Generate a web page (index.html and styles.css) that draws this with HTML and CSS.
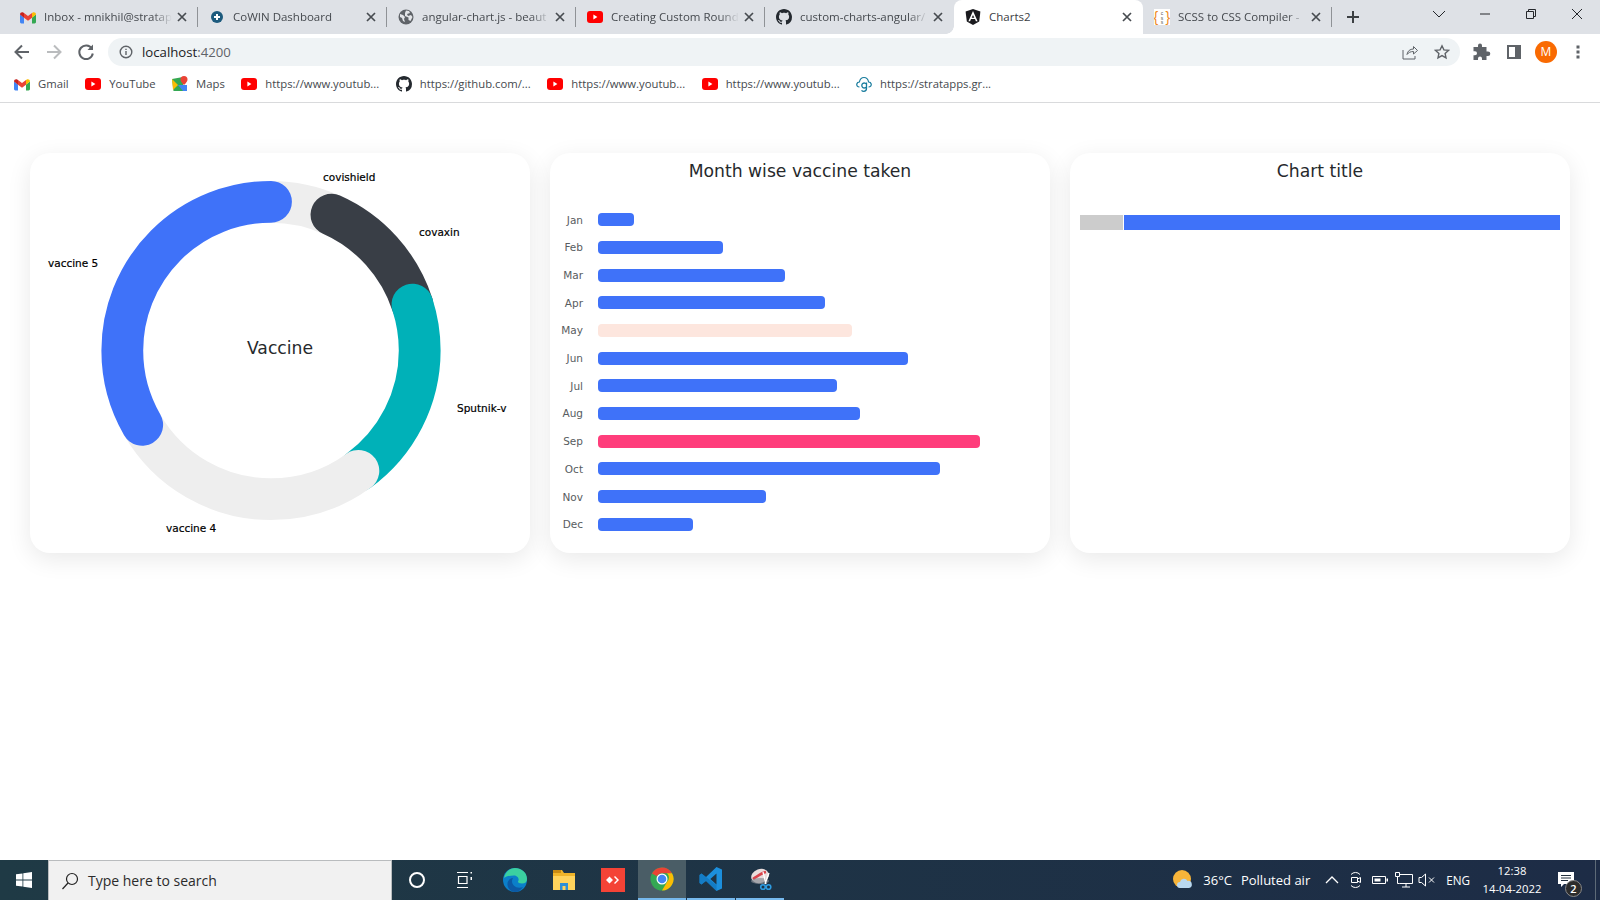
FILE: index.html
```html
<!DOCTYPE html>
<html lang="en">
<head>
    <meta charset="UTF-8">
    <title>Charts2</title>
    <link rel="stylesheet" href="styles.css">
</head>
<body>
<svg class="icon-defs" width="0" height="0">
    <symbol id="gmail" viewBox="0 0 16 13">
        <path fill="#4285f4" d="M0 4v7.6C0 12.4.6 13 1.4 13H4V7z"/>
        <path fill="#34a853" d="M12 7v6h2.6c.8 0 1.4-.6 1.4-1.4V4z"/>
        <path fill="#ea4335" d="M4 7.2V2.6l4 3 4-3v4.6l-4 3z"/>
        <path fill="#c5221f" d="M0 4c0-2 2-2.8 3.2-1.9L4 2.6v4.6z"/>
        <path fill="#fbbc04" d="M12 2.6l.8-.5C14 1.2 16 2 16 4l-4 3.2z"/>
    </symbol>
    <symbol id="youtube" viewBox="0 0 16 12">
        <rect width="16" height="12" rx="3" fill="#f00"/>
        <path fill="#fff" d="M6.4 3.6v4.800L10.4 6z"/>
    </symbol>
    <symbol id="github" viewBox="0 0 16 16">
        <path fill="#24292f" d="M8 0C3.58 0 0 3.58 0 8c0 3.54 2.29 6.53 5.47 7.59.4.07.55-.17.55-.38 0-.19-.01-.82-.01-1.49-2.01.37-2.53-.49-2.69-.94-.09-.23-.48-.94-.82-1.13-.28-.15-.68-.52-.01-.53.63-.01 1.08.58 1.23.82.72 1.21 1.87.87 2.33.66.07-.52.28-.87.51-1.07-1.78-.2-3.64-.89-3.64-3.95 0-.87.31-1.59.82-2.15-.08-.2-.36-1.02.08-2.12 0 0 .67-.21 2.2.82.64-.18 1.32-.27 2-.27.68 0 1.36.09 2 .27 1.53-1.04 2.2-.82 2.2-.82.44 1.1.16 1.92.08 2.12.51.56.82 1.27.82 2.15 0 3.07-1.87 3.75-3.65 3.95.29.25.54.73.54 1.48 0 1.07-.01 1.93-.01 2.2 0 .21.15.46.55.38A8.013 8.013 0 0016 8c0-4.42-3.58-8-8-8z"/>
    </symbol>
    <symbol id="close" viewBox="0 0 10 10">
        <path d="M1 1l8 8M9 1L1 9" stroke="#474b50" stroke-width="1.7" fill="none"/>
    </symbol>
</svg>

<header class="browser">
    <div class="tabstrip">
        <div class="tab">
            <svg class="favicon"><use href="#gmail"/></svg>
            <span class="tab-title">Inbox - mnikhil@stratap</span>
            <svg class="tab-close"><use href="#close"/></svg>
        </div>
        <div class="tab">
            <svg class="favicon" viewBox="0 0 16 16">
                <circle cx="8" cy="8" r="6" fill="#1c5a7d"/>
                <path d="M8 5v6M5 8h6" stroke="#fff" stroke-width="2"/>
            </svg>
            <span class="tab-title">CoWIN Dashboard</span>
            <svg class="tab-close"><use href="#close"/></svg>
        </div>
        <div class="tab">
            <svg class="favicon" viewBox="0 0 16 16">
                <circle cx="8" cy="8" r="7.5" fill="#5f6368"/>
                <path d="M2 5l3 1 2 2-1 2 1 3-2-1-1-3-2-1zM8 1.5l3 .5 1 2-3 1 1 2 3-1 1.5 2-2 4-2-1V8.5L7 7V4z" fill="#e3e5e8"/>
            </svg>
            <span class="tab-title">angular-chart.js - beaut</span>
            <svg class="tab-close"><use href="#close"/></svg>
        </div>
        <div class="tab">
            <svg class="favicon"><use href="#youtube"/></svg>
            <span class="tab-title">Creating Custom Round</span>
            <svg class="tab-close"><use href="#close"/></svg>
        </div>
        <div class="tab tab-before-active">
            <svg class="favicon"><use href="#github"/></svg>
            <span class="tab-title">custom-charts-angular/</span>
            <svg class="tab-close"><use href="#close"/></svg>
        </div>
        <div class="tab tab-active">
            <svg class="favicon" viewBox="0 0 16 16">
                <path fill="#1a1a1e" d="M8 0L.6 2.6l1.2 9.800L8 16l6.200-3.600 1.200-9.800z"/>
                <path fill="#fff" d="M8 2L3.400 12.300h1.700l.9-2.300h4l.9 2.300h1.700zM8 5.900L9.300 8.700H6.700z"/>
            </svg>
            <span class="tab-title tab-title-full">Charts2</span>
            <svg class="tab-close"><use href="#close"/></svg>
        </div>
        <div class="tab">
            <svg class="favicon" viewBox="0 0 16 16">
                <rect width="16" height="16" fill="#fff"/>
                <text x="-0.5" y="12.5" class="scss-brace">{</text>
                <text x="11.5" y="12.5" class="scss-brace">}</text>
                <text x="8" y="6" class="scss-letter">c</text>
                <text x="8" y="10.5" class="scss-letter">s</text>
                <text x="8" y="15" class="scss-letter">s</text>
            </svg>
            <span class="tab-title">SCSS to CSS Compiler -</span>
            <svg class="tab-close"><use href="#close"/></svg>
        </div>
        <svg class="new-tab" viewBox="0 0 14 14">
            <path d="M7 1v12M1 7h12" stroke="#3c4043" stroke-width="2"/>
        </svg>
        <div class="window-controls">
            <svg viewBox="0 0 46 28"><path d="M17 11l6 6 6-6"/></svg>
            <svg viewBox="0 0 46 28"><path d="M18 14h10"/></svg>
            <svg viewBox="0 0 46 28"><path d="M18.5 11.500h7v7h-7zM20.500 11.500v-2h7v7h-2"/></svg>
            <svg viewBox="0 0 46 28"><path d="M18 9l10 10M28 9L18 19"/></svg>
        </div>
    </div>

    <div class="toolbar">
        <svg class="tool-btn" viewBox="0 0 32 32"><path d="M23 16H10M16 9.5L9.5 16l6.5 6.5" class="tool-stroke"/></svg>
        <svg class="tool-btn tool-disabled" viewBox="0 0 32 32"><path d="M9 16h13M16 9.5l6.5 6.5-6.5 6.5" class="tool-stroke"/></svg>
        <svg class="tool-btn" viewBox="0 0 32 32"><path d="M21.800 12.500a6.800 6.800 0 1 0 1 5" class="tool-stroke"/><path d="M23 8.5v5.500h-5.500z" fill="#5f6368"/></svg>
        <div class="omnibox">
            <svg class="omni-info" viewBox="0 0 14 14">
                <circle cx="7" cy="7" r="5.8" fill="none" stroke="#5f6368" stroke-width="1.4"/>
                <path d="M7 6v4M7 3.700v1.400" stroke="#5f6368" stroke-width="1.4"/>
            </svg>
            <span class="url">localhost<span class="url-port">:4200</span></span>
            <svg class="omni-share" viewBox="0 0 16 16">
                <path d="M1 6v9h12v-3M5 10.5c.5-3.5 3-5.500 6.500-5.500V2.500L15.500 6.500 11.500 10V7.500C8.500 7.500 6.500 8.500 5 10.500z" fill="none" stroke="#5f6368" stroke-width="1"/>
            </svg>
            <svg class="omni-star" viewBox="0 0 16 16">
                <path d="M8 1.800l1.900 4.100 4.500.5-3.300 3 .9 4.400L8 11.600l-4 2.200.9-4.400-3.300-3 4.500-.5z" fill="none" stroke="#5f6368" stroke-width="1.4"/>
            </svg>
        </div>
        <svg class="tool-btn" viewBox="2 0 32 32"><path fill="#5f6368" d="M14 9.5a2 2 0 0 1 4 0V11h4.500v4.500H24a2.300 2.300 0 0 1 0 4.600h-1.500V24H18v-1.500a2 2 0 0 0-4 0V24H9.500v-4.800H11a2 2 0 0 0 0-4H9.500V11H14z"/></svg>
        <svg class="tool-btn" viewBox="0 0 32 32"><path fill="#5f6368" d="M9 9h14v14H9zM11 11v10h6V11z" fill-rule="evenodd"/></svg>
        <div class="avatar-btn"><span class="avatar">M</span></div>
        <svg class="tool-btn" viewBox="0 0 32 32"><path fill="#5f6368" d="M14.5 9.5h3v3h-3zM14.5 14.5h3v3h-3zM14.5 19.5h3v3h-3z"/></svg>
    </div>

    <div class="bookmarks">
        <a class="bookmark"><svg class="favicon"><use href="#gmail"/></svg><span>Gmail</span></a>
        <a class="bookmark"><svg class="favicon"><use href="#youtube"/></svg><span>YouTube</span></a>
        <a class="bookmark">
            <svg class="favicon" viewBox="0 0 16 16">
                <path fill="#34a853" d="M0 3l11-2v14H1.5z"/>
                <path fill="#fbbc04" d="M0 3l6 6-5 5z"/>
                <path fill="#4285f4" d="M6 9l5 6h4V9z"/>
                <path fill="#ea4335" d="M12 0a3.5 3.5 0 0 1 3.5 3.5C15.5 6 12 9 12 9S8.500 6 8.500 3.500A3.500 3.500 0 0 1 12 0z"/>
            </svg>
            <span>Maps</span>
        </a>
        <a class="bookmark"><svg class="favicon"><use href="#youtube"/></svg><span>https://www.youtub...</span></a>
        <a class="bookmark"><svg class="favicon"><use href="#github"/></svg><span>https://github.com/...</span></a>
        <a class="bookmark"><svg class="favicon"><use href="#youtube"/></svg><span>https://www.youtub...</span></a>
        <a class="bookmark"><svg class="favicon"><use href="#youtube"/></svg><span>https://www.youtub...</span></a>
        <a class="bookmark">
            <svg class="favicon" viewBox="0 0 16 16">
                <path d="M3.5 11C1.500 11 .5 9.500.8 8c.3-1.300 1.400-2 2.600-2C4 3 6 1.500 8 1.500S12 3 12.600 6c1.200 0 2.300.7 2.600 2 .3 1.500-.7 3-2.700 3" fill="none" stroke="#1a7d9e" stroke-width="1.2"/>
                <path d="M10.5 6.5v6c0 1.800-1.200 2.800-2.700 2.800-1 0-1.800-.4-2.300-1M10.500 8.300a2.500 2.500 0 1 0 0 2.400" fill="none" stroke="#1a7d9e" stroke-width="1.3"/>
            </svg>
            <span>https://stratapps.gr...</span>
        </a>
    </div>
</header>

<main class="dashboard">
    <section class="card">
        <svg class="donut" viewBox="0 0 500 400">
            <g transform="rotate(-90 241 197.5)">
                <circle class="arc arc-grey" cx="241" cy="197.5" r="148.7" pathLength="360" stroke-dasharray="24 336"/>
                <circle class="arc arc-dark" cx="241" cy="197.5" r="148.7" pathLength="360" stroke-dasharray="48 312" stroke-dashoffset="-24"/>
                <circle class="arc arc-teal" cx="241" cy="197.5" r="148.7" pathLength="360" stroke-dasharray="72 288" stroke-dashoffset="-72"/>
                <circle class="arc arc-grey" cx="241" cy="197.5" r="148.7" pathLength="360" stroke-dasharray="96 264" stroke-dashoffset="-144"/>
                <circle class="arc arc-blue" cx="241" cy="197.5" r="148.7" pathLength="360" stroke-dasharray="120 240" stroke-dashoffset="-240"/>
            </g>
            <text class="donut-title" x="250" y="201">Vaccine</text>
            <text class="donut-label" x="293" y="28">covishield</text>
            <text class="donut-label" x="389" y="83">covaxin</text>
            <text class="donut-label" x="18" y="114">vaccine 5</text>
            <text class="donut-label" x="427" y="259">Sputnik-v</text>
            <text class="donut-label" x="136" y="379">vaccine 4</text>
        </svg>
    </section>

    <section class="card">
        <h2 class="card-title">Month wise vaccine taken</h2>
        <ul class="bars">
            <li class="bar-row"><span class="bar-label">Jan</span><span class="bar" style="width:36px"></span></li>
            <li class="bar-row"><span class="bar-label">Feb</span><span class="bar" style="width:125px"></span></li>
            <li class="bar-row"><span class="bar-label">Mar</span><span class="bar" style="width:187px"></span></li>
            <li class="bar-row"><span class="bar-label">Apr</span><span class="bar" style="width:227px"></span></li>
            <li class="bar-row"><span class="bar-label">May</span><span class="bar bar-light" style="width:254px"></span></li>
            <li class="bar-row"><span class="bar-label">Jun</span><span class="bar" style="width:310px"></span></li>
            <li class="bar-row"><span class="bar-label">Jul</span><span class="bar" style="width:239px"></span></li>
            <li class="bar-row"><span class="bar-label">Aug</span><span class="bar" style="width:262px"></span></li>
            <li class="bar-row"><span class="bar-label">Sep</span><span class="bar bar-pink" style="width:382px"></span></li>
            <li class="bar-row"><span class="bar-label">Oct</span><span class="bar" style="width:342px"></span></li>
            <li class="bar-row"><span class="bar-label">Nov</span><span class="bar" style="width:168px"></span></li>
            <li class="bar-row"><span class="bar-label">Dec</span><span class="bar" style="width:95px"></span></li>
        </ul>
    </section>

    <section class="card">
        <h2 class="card-title">Chart title</h2>
        <div class="stacked">
            <span class="stack-part stack-grey" style="width:43px"></span>
            <span class="stack-part stack-blue"></span>
        </div>
    </section>
</main>

<footer class="taskbar">
    <svg class="task-start" viewBox="0 0 16 16"><path fill="#fff" d="M0 2.3l6.5-.9v6.2H0zM7.3 1.300L16 0v7.600H7.300zM0 8.400h6.500v6.200L0 13.700zM7.300 8.400H16V16l-8.700-1.300z"/></svg>
    <div class="task-search">
        <svg class="search-glass" viewBox="0 0 18 18">
            <circle cx="11" cy="7" r="5.5" fill="none" stroke="#222" stroke-width="1.2"/>
            <path d="M7 11l-5.5 6" stroke="#222" stroke-width="1.2"/>
        </svg>
        <span>Type here to search</span>
    </div>
    <div class="task-apps">
        <div class="task-app">
            <svg viewBox="0 0 24 24"><circle cx="12" cy="12" r="7" fill="none" stroke="#fff" stroke-width="2"/></svg>
        </div>
        <div class="task-app">
            <svg viewBox="2 0 24 24"><path d="M5 4.5h11M5 19.500h11M6.500 8.500h8.500v7H6.500z" fill="none" stroke="#fff" stroke-width="1.2"/><path d="M18.5 4h1.500v1.500h-1.500zM18.500 9h1.500v3h-1.500z" fill="#fff"/></svg>
        </div>
        <div class="task-app">
            <svg viewBox="0 0 24 24">
                <circle cx="12" cy="12" r="12" fill="#0b7fc9"/>
                <path d="M1 10C2 4 7 0 12 0c6 0 12 4 12 11 0 3-2 4.500-5 4.500-3 0-4-1-4-2 2-3-1-6-4-6-4 0-8 1-10 2.500z" fill="#3bd0a0"/>
                <path d="M9 13c0 5 5 8 11 6-2 3-5 5-8 5-4 0-7-3-7.500-7C4 13 7 10 10 10c-.5 1-1 2-1 3z" fill="#0c59a4"/>
            </svg>
        </div>
        <div class="task-app">
            <svg viewBox="0 0 24 24">
                <path d="M1 2h9l2 3h11v17H1z" fill="#f0b429"/>
                <path d="M1 2h8v3H1z" fill="#c98a12"/>
                <path d="M1 8h22v14H1z" fill="#ffd35c"/>
                <path d="M8 22v-7h8v7z" fill="#2d8fd5"/>
                <path d="M10.5 22v-4h3v4z" fill="#ffd35c"/>
            </svg>
        </div>
        <div class="task-app">
            <svg viewBox="0 0 24 24">
                <rect width="24" height="24" fill="#f44336"/>
                <path d="M8.5 8.500L12 12l-3.500 3.500L5 12zM14 8l4 4-4 4-1-1 3-3-3-3z" fill="#fff"/>
            </svg>
        </div>
        <div class="task-app task-app-active task-app-open">
            <svg viewBox="0 0 24 24">
                <circle cx="12" cy="12" r="11.5" fill="#34a853"/>
                <path d="M12 .5a11.5 11.5 0 0 1 10 5.750H12a5.750 5.750 0 0 0-5 2.900L2 6.500A11.500 11.500 0 0 1 12 .5z" fill="#ea4335"/>
                <path d="M22 6.25A11.5 11.5 0 0 1 12 23.500l5-8.600a5.750 5.750 0 0 0 0-8.650z" fill="#fbbc04"/>
                <circle cx="12" cy="12" r="5.5" fill="#fff"/>
                <circle cx="12" cy="12" r="4.3" fill="#4285f4"/>
            </svg>
        </div>
        <div class="task-app task-app-open">
            <svg viewBox="0 0 24 24">
                <path d="M17.5 0L23 2.500v19L17.500 24 7 14l-4.500 3.500L.5 16V8l2-1.500L7 10zM17.500 6.500L11.300 12l6.200 5.500z" fill="#1c8fdc" fill-rule="evenodd"/>
                <path d="M.5 8l2-1.500L17.500 18v6L7 14l-4.500 3.500L.5 16z" fill="#0f6fb5" fill-opacity=".6"/>
            </svg>
        </div>
        <div class="task-app task-app-open">
            <svg viewBox="-2 0 24 24">
                <ellipse cx="10" cy="9" rx="9" ry="7" fill="#e8dcdc" transform="rotate(-20 10 9)"/>
                <path d="M3 12c3-2 8-6 13-7" stroke="#d8434b" stroke-width="2.5" fill="none"/>
                <ellipse cx="10" cy="14" rx="9" ry="3" fill="#8a8f96" opacity=".7"/>
                <path d="M13 5l3 12M19 6l-4 11" stroke="#fff" stroke-width="1.3" fill="none"/>
                <circle cx="13" cy="20" r="2.3" fill="none" stroke="#2d9be0" stroke-width="1.6"/>
                <circle cx="18.5" cy="20" r="2.3" fill="none" stroke="#2d9be0" stroke-width="1.6"/>
            </svg>
        </div>
    </div>
    <div class="task-tray">
        <svg class="tray-weather" viewBox="0 0 20 20">
            <circle cx="9" cy="9" r="9" fill="#f8b53a"/>
            <path d="M7 18a3 3 0 0 1 0-6 4 4 0 0 1 7.5-1 3.5 3.5 0 0 1 1.500 7z" fill="#b9d8ef"/>
        </svg>
        <span class="tray-temp">36°C</span>
        <span class="tray-air">Polluted air</span>
        <svg class="tray-chevron" viewBox="0 0 14 8"><path d="M1 7l6-6 6 6"/></svg>
        <svg class="tray-meet" viewBox="0 0 14 18">
            <path d="M2 3.5a6 6 0 0 1 9 0M2 14.500a6 6 0 0 0 9 0"/>
            <path d="M2.5 6.500h6v5h-6zM8.500 8l3-1.500v5l-3-1.500z"/>
        </svg>
        <svg class="tray-battery" viewBox="0 0 16 10">
            <path d="M.5 1.500h13v7H.5z"/>
            <path d="M2.5 3.500h6v3h-6z" class="tray-fill"/>
            <path d="M14.5 3.500h1.500v3h-1.500z" class="tray-fill"/>
        </svg>
        <svg class="tray-network" viewBox="0 0 18 16">
            <path d="M4.5 2.500H17.500v9H4.500M11 11.500v3.500M7 15h8"/>
            <path d="M.5.500h4v4h-4z"/>
            <path d="M2.5 4.500v7h2"/>
        </svg>
        <svg class="tray-mute" viewBox="0 0 18 14">
            <path d="M1 4.500h2.500L7.500 1v12L3.500 9.500H1zM11 4.500l5 5M16 4.500l-5 5"/>
        </svg>
        <span class="tray-lang">ENG</span>
        <div class="tray-clock">
            <span>12:38</span>
            <span>14-04-2022</span>
        </div>
        <div class="tray-notify">
            <svg viewBox="0 0 18 16">
                <path fill="#fff" d="M0 0h16v12H6l-3 3v-3H0z"/>
                <path d="M3 3.5h10M3 6h10M3 8.500h7" stroke="#24313f" stroke-width="1"/>
            </svg>
            <span class="notify-badge">2</span>
        </div>
    </div>
</footer>
</body>
</html>
```

FILE: styles.css
```css
html, body {
    height: 100%;
    margin: 0;
    background-color: #fff;
    overflow: hidden;
}

body {
    display: flex;
    flex-direction: column;
    font-family: "Open Sans", "Noto Sans", sans-serif;
}

.icon-defs {
    display: none;
}

.favicon {
    width: 16px;
    height: 16px;
    flex: none;
}

/* browser frame */
.tabstrip {
    display: flex;
    align-items: center;
    height: 34px;
    padding-left: 9px;
    background-color: #dee1e6;
}

.tab {
    position: relative;
    display: flex;
    align-items: center;
    box-sizing: border-box;
    width: 189px;
    height: 34px;
    padding-left: 11px;
    font-size: 11.5px;
    color: #45494e;
}

.tab::after {
    content: "";
    width: 1px;
    height: 20px;
    margin-left: 10px;
    background-color: #8f9296;
}

.tab-before-active::after,
.tab-active::after {
    visibility: hidden;
}

.tab-active {
    border-radius: 8px 8px 0 0;
    background-color: #fff;
    color: #3c4043;
}

.tab-active::before {
    content: "";
    position: absolute;
    left: -8px;
    bottom: 0;
    width: 8px;
    height: 8px;
    background: radial-gradient(circle at 0 0, transparent 7.5px, #fff 8px);
}

.tab-title {
    flex: 1;
    min-width: 0;
    margin-left: 8px;
    margin-right: 5px;
    padding-bottom: 2px;
    overflow: hidden;
    white-space: nowrap;
    -webkit-mask-image: linear-gradient(to right, #000 85%, transparent);
    mask-image: linear-gradient(to right, #000 85%, transparent);
}

.tab-title-full {
    -webkit-mask-image: none;
    mask-image: none;
}

.tab-close {
    width: 10px;
    height: 10px;
    flex: none;
}

.scss-brace {
    font-family: "Liberation Sans", sans-serif;
    font-size: 14px;
    fill: #f08a1d;
}

.scss-letter {
    font-family: "Liberation Sans", sans-serif;
    font-size: 5px;
    text-anchor: middle;
    fill: #555;
}

.new-tab {
    width: 14px;
    height: 14px;
    margin-left: 14px;
}

.window-controls {
    display: flex;
    margin-left: auto;
    align-self: flex-start;
}

.window-controls svg {
    width: 46px;
    height: 28px;
    fill: none;
    stroke: #24272b;
    stroke-width: 1;
}

.toolbar {
    display: flex;
    align-items: center;
    height: 36px;
    padding-left: 6px;
    background-color: #fff;
}

.tool-btn {
    width: 32px;
    height: 32px;
    flex: none;
}

.tool-stroke {
    fill: none;
    stroke: #5f6368;
    stroke-width: 2;
}

.tool-disabled .tool-stroke {
    stroke: #babcbe;
}

.omnibox {
    display: flex;
    align-items: center;
    box-sizing: border-box;
    width: 1352px;
    height: 28px;
    margin: 0 6px;
    padding: 0 10px 0 11px;
    border-radius: 14px;
    background-color: #eff3f5;
}

.omni-info {
    width: 14px;
    height: 14px;
}

.url {
    margin-left: 9px;
    font-size: 13.2px;
    color: #202124;
}

.url-port {
    color: #5f6368;
}

.omni-share {
    width: 16px;
    height: 16px;
    margin-left: auto;
}

.omni-star {
    width: 16px;
    height: 16px;
    margin-left: 16px;
}

.avatar-btn {
    display: flex;
    justify-content: center;
    width: 32px;
}

.avatar {
    width: 22px;
    height: 22px;
    border-radius: 50%;
    background-color: #f96a02;
    color: #fff;
    font-size: 12px;
    line-height: 22px;
    text-align: center;
}

.bookmarks {
    display: flex;
    align-items: center;
    gap: 16.5px;
    height: 28px;
    padding: 0 0 4px 14px;
    border-bottom: 1px solid #d9dadc;
    background-color: #fff;
}

.bookmark {
    display: flex;
    align-items: center;
    gap: 8px;
    font-size: 11.3px;
    color: #45494e;
    white-space: nowrap;
}

.bookmark span {
    padding-bottom: 2px;
}

/* chart cards */
.dashboard {
    flex: 1;
    display: flex;
    align-items: flex-start;
    gap: 20px;
    padding: 50px 30px 0;
}

.card {
    flex: 0 0 500px;
    height: 400px;
    border-radius: 20px;
    background-color: #fff;
    box-shadow: 0 6px 24px rgba(0, 0, 0, 0.09);
}

.card-title {
    margin: 0;
    font-family: "DejaVu Sans", sans-serif;
    font-size: 17.2px;
    font-weight: normal;
    line-height: 36px;
    text-align: center;
    color: #26292c;
}

.donut {
    display: block;
    width: 500px;
    height: 400px;
}

.arc {
    fill: none;
    stroke-width: 41.8;
    stroke-linecap: round;
}

.arc-grey {
    stroke: #eeeeee;
}

.arc-dark {
    stroke: #393e46;
}

.arc-teal {
    stroke: #00b1b8;
}

.arc-blue {
    stroke: #3f72f9;
}

.donut-title {
    font-family: "DejaVu Sans", sans-serif;
    font-size: 17.2px;
    text-anchor: middle;
    fill: #26292c;
}

.donut-label {
    font-family: "DejaVu Sans", sans-serif;
    font-size: 10.5px;
    fill: #000;
    stroke: #000;
    stroke-width: 0.2px;
}

.bars {
    list-style: none;
    margin: 16.8px 0 0;
    padding: 0;
}

.bar-row {
    display: flex;
    align-items: center;
    height: 27.7px;
}

.bar-label {
    flex: none;
    width: 33px;
    margin-right: 15px;
    font-family: "DejaVu Sans", sans-serif;
    font-size: 10.5px;
    text-align: right;
    color: #585c60;
}

.bar {
    height: 13px;
    border-radius: 4px;
    background-color: #3f72f9;
}

.bar-light {
    background-color: #fde6de;
}

.bar-pink {
    background-color: #ff3d7b;
}

.stacked {
    display: flex;
    gap: 1px;
    height: 15px;
    margin: 26px 10px 0;
}

.stack-part {
    display: block;
}

.stack-grey {
    background-color: #cccccc;
}

.stack-blue {
    flex: 1;
    background-color: #3f72f9;
}

/* windows taskbar */
.taskbar {
    display: flex;
    align-items: center;
    flex: none;
    height: 40px;
    background: linear-gradient(to right, #1f3a45, #1d2c46);
    color: #fff;
}

.task-start {
    flex: none;
    width: 16px;
    height: 16px;
    margin: 0 16px;
}

.task-search {
    display: flex;
    align-items: center;
    box-sizing: border-box;
    width: 344px;
    height: 40px;
    padding-left: 12px;
    border: 1px solid #b9bcbe;
    border-width: 1px 1px 0;
    background-color: #f1f1f1;
    color: #2b2b2b;
    font-size: 14px;
}

.search-glass {
    width: 18px;
    height: 18px;
    margin-right: 9px;
}

.task-apps {
    display: flex;
    padding-left: 1px;
}

.task-app {
    display: flex;
    align-items: center;
    justify-content: center;
    box-sizing: border-box;
    width: 48px;
    height: 40px;
    margin-right: 1px;
}

.task-app svg {
    width: 24px;
    height: 24px;
}

.task-app-open {
    border-bottom: 2px solid #76b9ed;
}

.task-app-active {
    background-color: #4a5d66;
}

.task-tray {
    display: flex;
    align-items: center;
    margin-left: auto;
    margin-right: 4px;
    height: 40px;
    font-size: 13px;
}

.task-tray svg {
    flex: none;
    fill: none;
    stroke: #fff;
    stroke-width: 1;
}

.tray-weather {
    width: 20px;
    height: 20px;
    stroke: none !important;
}

.tray-temp {
    margin-left: 10px;
}

.tray-air {
    margin-left: 9px;
}

.tray-chevron {
    width: 14px;
    height: 8px;
    margin-left: 15px;
    stroke-width: 1.3 !important;
}

.tray-meet {
    width: 14px;
    height: 18px;
    margin-left: 10px;
}

.tray-battery {
    width: 16px;
    height: 10px;
    margin-left: 9px;
}

.tray-fill {
    fill: #fff;
    stroke: none;
}

.tray-network {
    width: 18px;
    height: 16px;
    margin-left: 7px;
}

.tray-mute {
    width: 18px;
    height: 14px;
    margin-left: 5px;
}

.tray-lang {
    margin-left: 10px;
    font-size: 11.7px;
}

.tray-clock {
    display: flex;
    flex-direction: column;
    align-items: center;
    width: 70px;
    margin-left: 7px;
    font-size: 11.3px;
    line-height: 18px;
}

.tray-notify {
    position: relative;
    box-sizing: border-box;
    width: 46px;
    height: 40px;
    margin-left: 3px;
    padding: 12px 0 0 8px;
    border-right: 1px solid #5d6a77;
}

.tray-notify svg {
    display: block;
    width: 18px;
    height: 16px;
    stroke: none;
}

.notify-badge {
    position: absolute;
    left: 15px;
    top: 20px;
    width: 15px;
    height: 15px;
    border-radius: 50%;
    border: 1px solid #888;
    background-color: #2c2c2c;
    font-size: 11px;
    font-weight: 600;
    line-height: 15px;
    text-align: center;
}
```
